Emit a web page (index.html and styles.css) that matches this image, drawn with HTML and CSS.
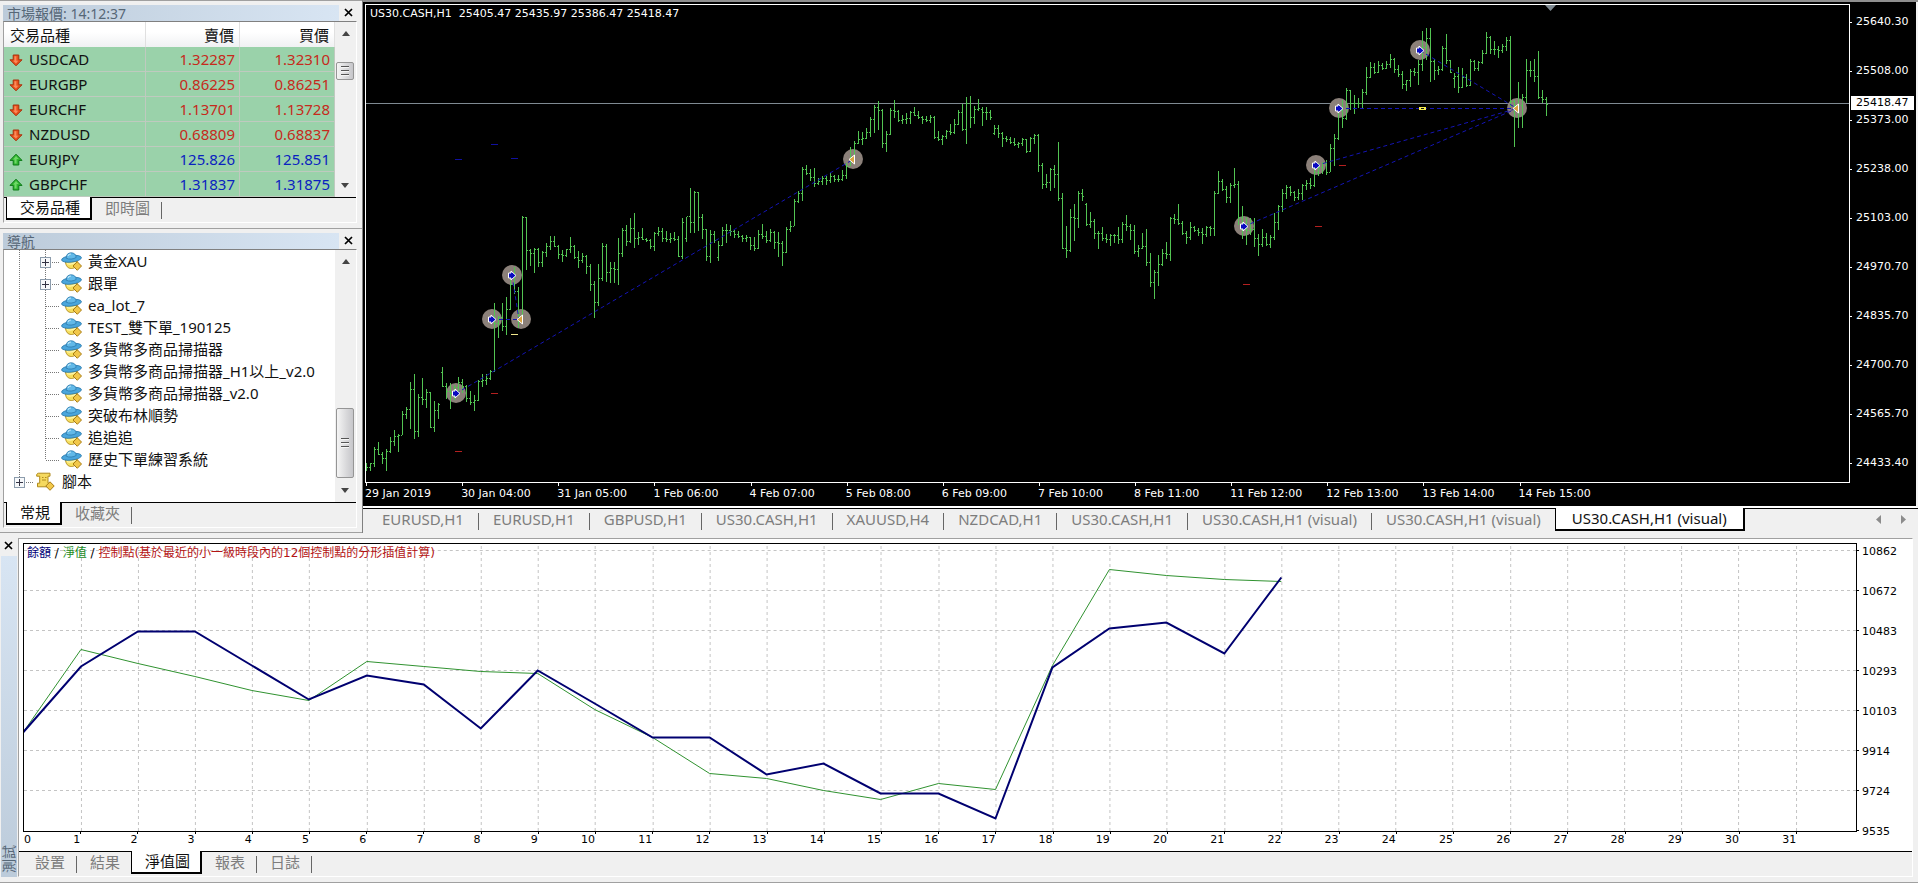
FILE: index.html
```html
<!DOCTYPE html>
<html lang="zh-Hant">
<head>
<meta charset="utf-8">
<title>US30.CASH,H1 (visual)</title>
<link rel="stylesheet" href="styles.css">
</head>
<body>
<svg class="defs" aria-hidden="true">
  <symbol id="i-close" viewBox="0 0 9 9"><path d="M1 1l7 7M8 1l-7 7" stroke="#000" stroke-width="1.7" fill="none"/></symbol>
  <symbol id="i-up" viewBox="0 0 14 14"><path d="M7 1.2 13 7.4H9.8V12H4.2V7.4H1z" fill="#2fb52f" stroke="#0c7a17" stroke-width="1"/><path d="M7 3 9.8 6H7.6v4.5H5.6V6.4H4z" fill="#6fd868"/></symbol>
  <symbol id="i-down" viewBox="0 0 14 14"><path d="M7 12.8 1 6.8h3.2V2h5.6v4.8H13z" fill="#e8501c" stroke="#a8300c" stroke-width="1"/><path d="M5.4 3.2h2v4.6h1.8L7 10.4 4 7.8h1.4z" fill="#fb8a5a"/></symbol>
  <symbol id="i-expert" viewBox="0 0 21 19">
    <path d="M4.4 9.5c.3 4.600 2.600 7 6 7s6-2.200 6.200-7z" fill="#f6df5e" stroke="#b08a1c" stroke-width=".9"/>
    <path d="M6 11.500c2 1 5 1 8.500-1.200" stroke="#fff6b0" stroke-width="1.300" fill="none"/>
    <ellipse cx="10.500" cy="6.800" rx="10" ry="3.300" transform="rotate(-7 10.500 6.800)" fill="#4aa6dc" stroke="#2b78ab" stroke-width=".8"/>
    <path d="M5.200 6.200C5 3 7 .8 10 .8s5 1.600 5.200 4.600c-2.500 1.900-7.400 2.200-10 .8z" fill="#62b9e8" stroke="#2b78ab" stroke-width=".8"/>
    <path d="M7 3.800c.6-1.200 1.600-1.800 3-1.800" stroke="#c9ebfb" stroke-width="1.200" fill="none"/>
    <path d="M16.300 9.800 20.500 14l-4.200 4.300L12 14z" fill="#f2c84a" stroke="#a97c14" stroke-width="1"/>
  </symbol>
  <symbol id="i-script" viewBox="0 0 20 19">
    <path d="M3 1.200h11.500v3h-2v7h2.200v3.600H2V11.200h2.200v-7H1.200C1 2.400 1.600 1.200 3 1.200z" fill="#f5d95f" stroke="#b08a1c" stroke-width="1"/>
    <path d="M6.500 5.500h1.500m1.500 0h1.500M6.500 8h4" stroke="#b08a1c" stroke-width="1"/>
    <path d="M14.500 9.800 18.700 14l-4.200 4.300L10.300 14z" fill="#f2c84a" stroke="#a97c14" stroke-width="1"/>
  </symbol>
</svg>

<main class="terminal">
  <aside class="sidebar">
    <section class="panel">
      <header class="titlebar"><h2>市場報價: 14:12:37</h2><button class="close" aria-label="關閉"><svg><use href="#i-close"/></svg></button></header>
      <div class="frame">
        <div class="view">
          <table class="quotes">
            <colgroup><col class="c-symbol"><col class="c-bid"><col></colgroup>
            <thead><tr><th>交易品種</th><th>賣價</th><th>買價</th></tr></thead>
            <tbody>
              <tr class="down"><td><svg><use href="#i-down"/></svg>USDCAD</td><td>1.32287</td><td>1.32310</td></tr>
              <tr class="down"><td><svg><use href="#i-down"/></svg>EURGBP</td><td>0.86225</td><td>0.86251</td></tr>
              <tr class="down"><td><svg><use href="#i-down"/></svg>EURCHF</td><td>1.13701</td><td>1.13728</td></tr>
              <tr class="down"><td><svg><use href="#i-down"/></svg>NZDUSD</td><td>0.68809</td><td>0.68837</td></tr>
              <tr class="up"><td><svg><use href="#i-up"/></svg>EURJPY</td><td>125.826</td><td>125.851</td></tr>
              <tr class="up"><td><svg><use href="#i-up"/></svg>GBPCHF</td><td>1.31837</td><td>1.31875</td></tr>
            </tbody>
          </table>
          <div class="scroll"><button class="arrow" aria-label="向上"></button><span class="thumb thumb-quotes"></span><button class="arrow arrow-down" aria-label="向下"></button></div>
        </div>
        <nav class="tabs"><button class="tab active">交易品種</button><button class="tab">即時圖</button></nav>
      </div>
    </section>

    <section class="panel panel-nav">
      <header class="titlebar"><h2>導航</h2><button class="close" aria-label="關閉"><svg><use href="#i-close"/></svg></button></header>
      <div class="frame">
        <div class="view">
          <ul class="tree">
            <li><button class="expand" aria-label="展開"></button><svg><use href="#i-expert"/></svg>黃金XAU</li>
            <li><button class="expand" aria-label="展開"></button><svg><use href="#i-expert"/></svg>跟單</li>
            <li><svg><use href="#i-expert"/></svg>ea_lot_7</li>
            <li><svg><use href="#i-expert"/></svg>TEST_雙下單_190125</li>
            <li><svg><use href="#i-expert"/></svg>多貨幣多商品掃描器</li>
            <li><svg><use href="#i-expert"/></svg>多貨幣多商品掃描器_H1以上_v2.0</li>
            <li><svg><use href="#i-expert"/></svg>多貨幣多商品掃描器_v2.0</li>
            <li><svg><use href="#i-expert"/></svg>突破布林順勢</li>
            <li><svg><use href="#i-expert"/></svg>追追追</li>
            <li class="last"><svg><use href="#i-expert"/></svg>歷史下單練習系統</li>
            <li class="root"><button class="expand" aria-label="展開"></button><svg><use href="#i-script"/></svg>腳本</li>
          </ul>
          <div class="scroll"><button class="arrow" aria-label="向上"></button><span class="thumb thumb-tree"></span><button class="arrow arrow-down" aria-label="向下"></button></div>
        </div>
        <nav class="tabs"><button class="tab active">常規</button><button class="tab">收藏夾</button></nav>
      </div>
    </section>
  </aside>

  <section class="market">
    <div class="chart">
      <div class="plot">
        <svg id="price" viewBox="366 5 1483 477" preserveAspectRatio="none" role="img" aria-label="US30.CASH H1"></svg>
        <p class="ohlc">US30.CASH,H1  25405.47 25435.97 25386.47 25418.47</p>
      </div>
      <ol class="prices">
        <li>25640.30</li><li>25508.00</li><li>25373.00</li><li>25238.00</li><li>25103.00</li><li>24970.70</li><li>24835.70</li><li>24700.70</li><li>24565.70</li><li>24433.40</li>
      </ol>
      <span class="last-price">25418.47</span>
      <ol class="times">
        <li>29 Jan 2019</li><li>30 Jan 04:00</li><li>31 Jan 05:00</li><li>1 Feb 06:00</li><li>4 Feb 07:00</li><li>5 Feb 08:00</li><li>6 Feb 09:00</li><li>7 Feb 10:00</li><li>8 Feb 11:00</li><li>11 Feb 12:00</li><li>12 Feb 13:00</li><li>13 Feb 14:00</li><li>14 Feb 15:00</li>
      </ol>
    </div>
    <nav class="tabs chart-tabs">
      <button class="tab">EURUSD,H1</button><button class="tab">EURUSD,H1</button><button class="tab">GBPUSD,H1</button><button class="tab">US30.CASH,H1</button><button class="tab">XAUUSD,H4</button><button class="tab">NZDCAD,H1</button><button class="tab">US30.CASH,H1</button><button class="tab">US30.CASH,H1 (visual)</button><button class="tab">US30.CASH,H1 (visual)</button><button class="tab active">US30.CASH,H1 (visual)</button>
      <span class="pager"><button aria-label="上一個"></button><button class="next" aria-label="下一個"></button></span>
    </nav>
  </section>

  <section class="tester">
    <header class="side-title"><button class="close" aria-label="關閉"><svg><use href="#i-close"/></svg></button><h2>測試</h2></header>
    <div class="report">
      <div class="graph">
        <div class="curve">
          <svg id="balance" viewBox="24 544 1833 287" preserveAspectRatio="none" role="img" aria-label="淨值圖"></svg>
          <p class="legend"><span class="l-balance">餘額</span> / <span class="l-equity">淨值</span> / <span class="l-control">控制點(基於最近的小一級時段內的12個控制點的分形插值計算)</span></p>
        </div>
        <ol class="levels"><li>10862</li><li>10672</li><li>10483</li><li>10293</li><li>10103</li><li>9914</li><li>9724</li><li>9535</li></ol>
        <ol class="deals" id="deals"></ol>
      </div>
      <nav class="tabs"><button class="tab">設置</button><button class="tab">結果</button><button class="tab active">淨值圖</button><button class="tab">報表</button><button class="tab">日誌</button></nav>
    </div>
  </section>
</main>
<script src="chart.js"></script>
</body>
</html>
```
FILE: styles.css
```css
* { box-sizing: border-box; }
body {
  margin: 0;
  background: #f0f0f0;
  color: #111;
  font: 15px/20px "Noto Sans", "Noto Sans CJK TC", sans-serif;
}
h2, p, ul, ol { margin: 0; padding: 0; font-weight: 400; list-style: none; }
button { margin: 0; padding: 0; border: 0; background: none; color: inherit; font: inherit; }
.defs { position: absolute; width: 0; height: 0; }

.terminal {
  display: grid;
  grid-template: minmax(0, 533fr) minmax(0, 350fr) / 363px minmax(0, 1fr);
  height: 100vh;
  min-width: 1200px;
}

/* sidebar panels */
.sidebar {
  display: flex;
  flex-direction: column;
  border-right: 1px solid #808080;
}
.panel {
  padding: 3px 5px 5px 3px;
  border-top: 1px solid #a0a0a0;
}
.panel-nav {
  flex: 1;
  display: flex;
  flex-direction: column;
  padding-bottom: 4px;
  border-bottom: 1px solid #a0a0a0;
}
.titlebar { display: flex; justify-content: space-between; align-items: center; height: 17px; }
.titlebar h2 {
  flex: 1;
  height: 16px;
  padding-left: 4px;
  background: linear-gradient(90deg, #bccbda, #d8e5f3);
  color: #566777;
  font-size: 14px;
  line-height: 17px;
}
.close { display: flex; align-items: center; justify-content: center; width: 18px; height: 16px; }
.close svg { width: 9px; height: 9px; }
.frame {
  display: flex;
  flex-direction: column;
  flex: 1;
  border-top: 1px solid #808080;
  border-left: 1px solid #a0a0a0;
  border-right: 1px solid #fff;
  border-bottom: 1px solid #fff;
}
.view { display: flex; flex: 1; background: #fff; }

.quotes { flex: 1; border-collapse: separate; border-spacing: 0; table-layout: fixed; }
.c-symbol { width: 142px; }
.c-bid { width: 94px; }
.quotes th, .quotes td { height: 25px; padding: 0 4px 0 0; line-height: 20px; text-align: right; font-weight: 400; }
.quotes th { padding-right: 5px; border-right: 1px solid #e0e0e0; background: linear-gradient(#fff 40%, #f0f1f3); }
.quotes th:first-child { padding-left: 6px; text-align: left; }
.quotes td { border: solid #bfcabf; border-width: 0 1px 1px 0; background: #9ad2aa; }
.quotes td:first-child { padding-left: 5px; text-align: left; }
.quotes td svg { width: 14px; height: 14px; margin-right: 6px; vertical-align: -2px; }
.down td + td { color: #c62a1c; }
.up td + td { color: #0a22c0; }

.scroll {
  display: flex;
  flex-direction: column;
  width: 21px;
  padding: 2px 0;
  background: #f0f0f0;
}
.arrow { height: 18px; display: flex; align-items: center; justify-content: center; }
.arrow::before { content: ""; border: 4px solid transparent; border-top: 0; border-bottom: 5px solid #444; }
.arrow-down { margin-top: auto; transform: rotate(180deg); }
.thumb {
  display: flex;
  align-items: center;
  justify-content: center;
  width: 18px;
  margin-left: 1px;
  border: 1px solid #959595;
  border-radius: 2px;
  background: linear-gradient(90deg, #f5f5f5, #d8d8da 60%, #c6c6ca);
}
.thumb::before { content: ""; width: 8px; height: 10px; background: repeating-linear-gradient(#555 0 1px, #f5f5f5 1px 2px, transparent 2px 4px); }
.thumb-quotes { height: 18px; margin-top: 20px; }
.thumb-tree { height: 70px; margin-top: 138px; }

/* tab strips */
.tabs { display: flex; flex: none; height: 25px; padding-left: 3px; border-top: 1px solid #000; background: #f0f0f0; }
.tab { height: 22px; padding: 0 12px 2px 13px; color: #7d7d7d; white-space: nowrap; background: linear-gradient(#666, #666) right 4px / 1px 17px no-repeat; }
.tab.active {
  height: 23px;
  margin: -1px 0 0 -1px;
  padding: 0 10px 1px 13px;
  border: solid #000;
  border-width: 0 2px 2px 1px;
  background: #fff;
  color: #111;
}

/* navigator tree */
.tree { flex: 1; }
.tree li {
  display: flex;
  align-items: center;
  height: 22px;
  padding-left: 57px;
  background:
    repeating-linear-gradient(#777 0 1px, #fff 1px 2px) 15px 0 / 1px 100% no-repeat,
    repeating-linear-gradient(#777 0 1px, #fff 1px 2px) 41px 0 / 1px 100% no-repeat,
    repeating-linear-gradient(90deg, #777 0 1px, #fff 1px 2px) 42px 12px / 14px 1px no-repeat;
}
.tree li.last {
  background-size: 1px 100%, 1px 12px, 14px 1px;
}
.tree li.root {
  padding-left: 31px;
  background:
    repeating-linear-gradient(#777 0 1px, #fff 1px 2px) 15px 0 / 1px 12px no-repeat,
    repeating-linear-gradient(90deg, #777 0 1px, #fff 1px 2px) 16px 12px / 14px 1px no-repeat;
}
.tree svg { width: 21px; height: 19px; margin-right: 6px; }
.expand {
  width: 11px;
  height: 11px;
  margin: 2px 10px 0 -21px;
  border: 1px solid #8c9cac;
  background:
    linear-gradient(#334, #334) center / 7px 1px no-repeat,
    linear-gradient(#334, #334) center / 1px 7px no-repeat,
    #f6f8fa;
}

/* price chart */
.market { display: flex; flex-direction: column; min-width: 0; border-top: 2px solid #8e8e8e; }
.chart {
  position: relative;
  flex: 1;
  display: grid;
  grid-template: minmax(0, 1fr) 23px / minmax(0, 1fr) 66px;
  padding: 2px 0 0 2px;
  border-right: 2px solid #f4f4f4;
  border-bottom: 2px solid #fff;
  background: #000;
  color: #fff;
  font-family: "DejaVu Sans", sans-serif;
  font-size: 11px;
  line-height: 16px;
}
.plot { position: relative; border: 1px solid #fff; }
.plot svg { display: block; width: 100%; height: 100%; }
.ohlc { position: absolute; top: 1px; left: 4px; white-space: pre; }
.prices { display: grid; grid-template-rows: repeat(9, 49fr) 51fr; grid-row: 1 / 3; grid-column: 2; margin-top: 10px; }
.prices li { padding-left: 6px; background: linear-gradient(#fff, #fff) 0 8px / 2px 1px no-repeat; }
.last-price { position: absolute; top: 94px; right: 2px; width: 63px; padding-left: 5px; background: #fff; color: #000; line-height: 14px; }
.times { display: grid; grid-template-columns: repeat(15, 96fr) 43fr; grid-row: 2; grid-column: 1; }
.times li { padding-top: 3px; white-space: nowrap; background: linear-gradient(#fff, #fff) 1px 0 / 1px 3px no-repeat; }

.chart-tabs { padding-left: 5px; }
.chart-tabs .tab { padding: 0 15px 2px 14px; }
.chart-tabs .tab.active { padding: 0 16px 2px; }
.pager { display: flex; gap: 20px; margin: 6px 12px 0 auto; }
.pager button { width: 5px; height: 9px; background: #8c8c8c; clip-path: polygon(0 50%, 100% 0, 100% 100%); }
.pager .next { clip-path: polygon(0 0, 100% 50%, 0 100%); }

/* strategy tester */
.tester { display: flex; grid-column: 1 / 3; padding: 5px 5px 1px 1px; border-bottom: 1px solid #a0a0a0; min-width: 0; }
.side-title { display: flex; flex-direction: column; width: 17px; padding-bottom: 4px; }
.side-title .close { width: 14px; height: 14px; }
.side-title h2 {
  flex: 1;
  width: 16px;
  margin-top: 4px;
  padding-top: 4px;
  background: linear-gradient(0deg, #d8e5f3, #bccbda);
  color: #566777;
  font-size: 14px;
  line-height: 16px;
  writing-mode: vertical-rl;
  text-orientation: sideways;
  transform: rotate(180deg);
}
.report {
  display: flex;
  flex-direction: column;
  flex: 1;
  min-width: 0;
  margin-bottom: 4px;
  border-top: 1px solid #a0a0a0;
  border-left: 1px solid #a0a0a0;
  border-right: 1px solid #fff;
  border-bottom: 1px solid #fff;
}
.graph {
  flex: 1;
  display: grid;
  grid-template: minmax(0, 1fr) 19px / minmax(0, 1fr) 55px;
  padding: 4px 0 0 4px;
  background: #fff;
  color: #000;
  font-family: "DejaVu Sans", "Noto Sans CJK TC", sans-serif;
  font-size: 11px;
  line-height: 16px;
}
.curve { position: relative; border: 1px solid #000; }
.curve svg { display: block; width: 100%; height: 100%; }
.legend { position: absolute; top: 1px; left: 3px; font-size: 12px; }
.l-balance { color: #000078; }
.l-equity { color: #1c8c1c; }
.l-control { color: #b41414; }
.levels { display: grid; grid-template-rows: repeat(7, 40fr) 27fr; grid-row: 1 / 3; grid-column: 2; margin-top: 1px; }
.levels li { padding-left: 5px; background: linear-gradient(#000, #000) 0 6px / 2px 1px no-repeat; }
.deals { display: grid; grid-template-columns: 80fr 492fr repeat(30, 572fr) 598fr; grid-row: 2; grid-column: 1; padding-left: 1px; }
.deals li { padding-right: 1px; text-align: right; background: linear-gradient(#000, #000) right 0 / 1px 2px no-repeat; }
.deals li:first-child { background: none; }
```
FILE: chart.js
```js
// Bars are listed as high, low, close[, open] in thirds of a unit, in blocks that share a base line.
const blocks = [
  [180, `850,872,862 848,872,850 802,862,808 787,825,822 815,852,835 808,872,812 770,818,784 750,798,768
763,815,765 694,765,703 682,716,686 606,748,626 583,776,754 642,770,652 594,675,656 627,685,637
636,745,742 663,755,690 670,716,671 561,620,618,577 608,657,632 608,686,640 615,660,620 592,640,607
596,640,618 615,666,655 634,674,667 645,692,660 600,664,604 582,622,601 583,615,594 570,600,572
370,576,428 408,473,410 370,454,439 352,464,387 300,390,312 262,342,332 322,445,405 108,430,111
111,270,211 207,258,220 204,280,208 205,262,247 212,261,216 189,230,199 168,210,182 168,200,197
196,238,221 210,245,226 206,230,208 171,220,198 196,237,230 213,263,240 219,249,229 226,283,259
252,332,313 304,413,367 252,378,294 189,304,198 192,307,277 246,310,263 246,309,267 175,315,220
145,230,150 135,198,183 113,188,145 99,204,174 155,195,170 145,180,176 173,187,180 177,208,199
156,212,158 141,168,154 143,186,174 153,186,177 160,189,174 157,184,178 168,232,227 114,237,126`],
  [60, `470,545,468,535 384,518,487 392,520,397 396,513,472 461,537,508 507,603,587 510,608,523 513,548,540
543,603,556,590 500,557,511 492,550,510 495,527,514 510,535,522 512,533,527 524,545,534 525,546,532
530,570,556 530,573,563 510,568,523 492,538,527 513,550,540 506,546,517 513,566,547 515,590,548
543,618,575 500,579,506 482,516,497 416,498,424 393,428,398 320,423,328 315,344,338 327,364,351
324,381,370 354,376,362 348,375,354 348,376,360 338,368,347 344,366,358 344,366,356 331,362,344
308,357,318 260,318,290 242,300,249 212,252,237 215,255,234 204,238,216 170,231,177 136,220,141
122,210,150 147,264,250 212,275,221 144,225,150 120,174,152 150,187,180 165,192,178 158,192,173
153,193,155 141,168,165 153,177,170 167,192,176 168,187,181 164,189,171 168,238,230 213,243,236
224,255,228 210,236,213 192,224,216 177,222,193 149,195,157 132,212,206 110,251,128 108,204,170
138,192,147 117,153,145`],
  [80, `82,138,97,86 82,120,97 90,120,112 135,165,145,160 135,174,159 156,200,175 168,186,178 171,192,186
174,198,191 186,204,189 174,198,178 177,218,214 171,216,173 162,192,166 162,276,256 249,327,311
281,324,307 264,333,267 255,324,283 186,362,354 339,507,505 438,534,511 387,516,411 372,483,415
332,444,338 327,363,347 369,437,433,372 395,444,424 417,477,460 453,507,458 440,483,475 462,489,477
462,498,466 462,489,466 440,492,478 426,489,431 405,453,437 432,480,450 435,522,512 495,531,504
459,507,499 446,558,547 519,621,605 570,657,577 525,618,553 507,558,520 486,537,523 411,543,414
402,432,418 372,435,430 423,465,459 453,492,471 426,480,440 437,456,450 444,468,456 444,492,463
438,471,441 438,468,445 332,468,338 273,342,303 296,333,327 318,369,352 308,369,314 264,324,311
303,435,411 378,477,440`],
  [0, `650,735,690 655,705,688 655,741,715 702,768,733 687,741,710 700,738,733 705,744,711 639,720,667
615,690,617 567,636,580 555,597,562 557,588,576 573,603,592 567,600,580 552,600,555 540,570,548
534,567,556 505,560,515 490,528,500 486,522,490 480,525,516 432,516,444 402,498,415 325,420,330
300,384,353 264,360,271 270,330,309 285,342,310 294,324,308 267,324,277 201,285,232 186,234,201
189,222,217 183,219,195 189,210,203 183,207,192 162,204,178 174,218,206 195,230,222 213,267,252
239,272,241 207,261,213 204,228,216 180,255,193 93,213,140 84,180,115 84,246,184 177,240,210
199,225,208 138,213,145 102,192,181 180,219,216 220,264,228,234 201,279,262 204,264,232 222,261,256
177,258,182 180,213,205 183,213,187 150,192,160 96,162,110 108,162,148 123,164,148 138,174,150
132,159,139 111,153,121 108,320,303 300,441,315 246,384,315 282,384,292 177,309,209 183,231,209
177,246,229 153,297,292 270,309,298 291,348,311`]
];

let x = 366;
let previous = 467;
let bars = "";
for (const [base, rows] of blocks) {
  for (const row of rows.split(/\s+/)) {
    const [high, low, close, open] = row.split(",").map(v => Math.round(base + v / 3));
    const start = open === undefined ? previous : open;
    bars += `M${x + 0.5} ${high}V${low}M${x - 1} ${start + 0.5}h1M${x + 1} ${close + 0.5}h1`;
    previous = close;
    x += 4;
  }
}

const deals = [[456, 393, 853, 159], [492, 319, 521, 319], [512, 275, 519, 319], [1244, 226, 1517, 108],
  [1316, 165, 1517, 108], [1339, 108, 1517, 108], [1420, 50, 1517, 108]];
const buys = [[456, 393], [492, 319], [512, 275], [1244, 226], [1316, 165], [1339, 108], [1420, 50]];
const sells = [[521, 319], [853, 159], [1517, 108]];
const dashes = [["#b42020", 455, 451], ["#b42020", 491, 393], ["#b42020", 1243, 284], ["#b42020", 1315, 226],
  ["#b42020", 1339, 165], ["#f0e68c", 511, 334], ["#1010a0", 455, 159], ["#1010a0", 491, 144], ["#1010a0", 511, 158]];

const disc = ([cx, cy]) => `<circle cx="${cx}" cy="${cy}" r="10" fill="#8b8079"/>`;
const buy = ([cx, cy]) => `<path transform="translate(${cx} ${cy})" d="M-3.500-2H-1V-4L4 .5-1 5V3H-3.500z" fill="#0a0ac0" stroke="#fff" stroke-width="1"/>`;
const sell = ([cx, cy]) => `<path transform="translate(${cx} ${cy})" d="M-4 .5 1.500-4V5z" fill="#d9a441" stroke="#fff" stroke-width="1"/>`;

document.getElementById("price").innerHTML = `
  <path d="M366 103.500H1849" stroke="#7f8a92"/>
  <path d="M1545 5h11l-5.500 6z" fill="#7f8a92"/>
  ${[...buys, ...sells].map(disc).join("")}
  <path d="${bars}" fill="none" stroke="#52c452" shape-rendering="crispEdges"/>
  ${deals.map(d => `<path d="M${d[0]} ${d[1] + 0.5}L${d[2]} ${d[3] + 0.5}" stroke="#1414b4" stroke-dasharray="4 3"/>`).join("")}
  ${dashes.map(([c, a, b]) => `<path d="M${a} ${b + 0.5}h7" stroke="${c}"/>`).join("")}
  <rect x="1419" y="107" width="7" height="3" fill="#f4ec50"/><path d="M1421 108.500h3" stroke="#111"/>
  ${buys.map(buy).join("")}${sells.map(sell).join("")}`;

// Tester curve: one point per deal.
const balance = [732, 666, 631, 631, 665, 699, 675, 684, 728, 670, 703, 737, 737, 774, 763, 793, 793, 818, 667, 628, 622, 653, 577];
const equity = [732, 649, 663, 676, 690, 700, 661, 666, 671, 673, 709, 737, 773, 778, 790, 799, 783, 789, 665, 569, 575, 579, 581];
const at = n => Math.round(23.3 + 57.2 * n);
const line = list => list.map((y, n) => `${at(n)},${y + 0.5}`).join(" ");
let grid = "";
for (let n = 1; n <= 31; n++) grid += `M${at(n) + 0.5} 831V544`;
for (let y = 550; y < 830; y += 40) grid += `M24 ${y + 0.5}H1857`;

document.getElementById("balance").innerHTML = `
  <path d="${grid}" stroke="#c4c4c4" stroke-dasharray="3 3" fill="none"/>
  <polyline points="${line(equity)}" fill="none" stroke="#2f922f" stroke-width="1"/>
  <polyline points="${line(balance)}" fill="none" stroke="#000070" stroke-width="2"/>`;

document.getElementById("deals").innerHTML = Array.from({ length: 32 }, (_, n) => `<li>${n}</li>`).join("");
```
